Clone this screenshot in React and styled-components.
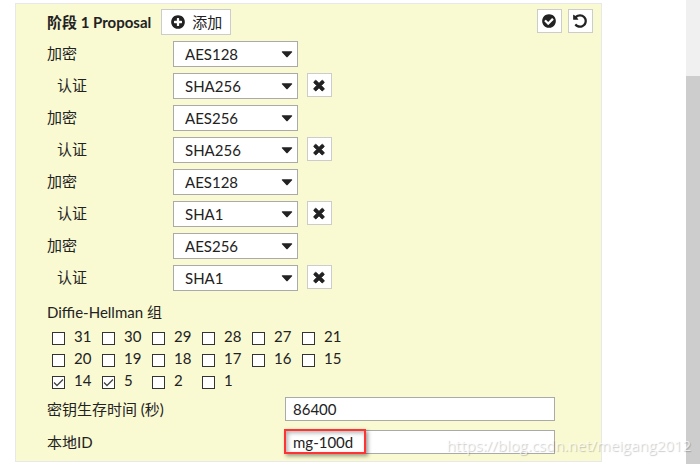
import React, { useState } from 'react';
import styled, { createGlobalStyle } from 'styled-components';

const GlobalStyle = createGlobalStyle`
    * {
        box-sizing: border-box;
    }

    body {
        margin: 0;
        background: #fff;
        color: #222;
        font-family: Lato, "Noto Sans CJK SC", sans-serif;
        font-size: 15px;
        line-height: 20px;
    }

    button, input, select {
        margin: 0;
        color: inherit;
        font: inherit;
    }
`;

const icons = {
    plus: 'M1344 960v-128q0-26-19-45t-45-19h-256v-256q0-26-19-45t-45-19h-128q-26 0-45 19t-19 45v256h-256q-26 0-45 19t-19 45v128q0 26 19 45t45 19h256v256q0 26 19 45t45 19h128q26 0 45-19t19-45v-256h256q26 0 45-19t19-45zm320-64q0 209-103 385.5t-279.5 279.5-385.5 103-385.5-103-279.5-279.5-103-385.5 103-385.5 279.5-279.5 385.5-103 385.5 103 279.5 279.5 103 385.5z',
    check: 'M1412 734q0-28-18-46l-91-90q-19-19-45-19t-45 19l-408 407-226-226q-19-19-45-19t-45 19l-91 90q-18 18-18 46 0 27 18 45l362 362q19 19 45 19 27 0 46-19l543-543q18-18 18-45zm252 162q0 209-103 385.5t-279.5 279.5-385.5 103-385.5-103-279.5-279.5-103-385.5 103-385.5 279.5-279.5 385.5-103 385.5 103 279.5 279.5 103 385.5z',
    undo: 'M1664 896q0 156-61 298t-164 245-245 164-298 61q-172 0-327-72.5t-264-204.5q-7-10-6.5-22.5t8.5-20.5l137-138q10-9 25-9 16 2 23 12 73 95 179 147t225 52q104 0 198.5-40.5t163.5-109.5 109.5-163.5 40.5-198.5-40.5-198.5-109.5-163.5-163.5-109.5-198.5-40.5q-98 0-188 35.5t-160 101.5l137 138q31 30 14 69-17 40-59 40h-448q-26 0-45-19t-19-45v-448q0-42 40-59 39-17 69 14l130 129q107-101 244.5-156.5t284.5-55.5q156 0 298 61t245 164 164 245 61 298z',
    times: 'M1490 1322q0 40-28 68l-136 136q-28 28-68 28t-68-28l-294-294-294 294q-28 28-68 28t-68-28l-136-136q-28-28-28-68t28-68l294-294-294-294q-28-28-28-68t28-68l136-136q28-28 68-28t68 28l294 294 294-294q28-28 68-28t68 28l136 136q28 28 28 68t-28 68l-294 294 294 294q28 28 28 68z',
    caret: 'M1480 660q0 26-19 45l-520 544q-19 19-45 19t-45-19l-520-544q-19-19-19-45t19-45 45-19h1040q26 0 45 19t19 45z',
};

const Icon = ({ name }) => (
    <svg width="16" height="16" viewBox="0 0 1792 1792" fill="currentColor" aria-hidden="true">
        <path d={icons[name]} stroke="currentColor" strokeWidth={name === 'times' ? 70 : 0} />
    </svg>
);

const proposals = [
    { encryption: 'AES128', auth: 'SHA256' },
    { encryption: 'AES256', auth: 'SHA256' },
    { encryption: 'AES128', auth: 'SHA1' },
    { encryption: 'AES256', auth: 'SHA1' },
];

const groups = [31, 30, 29, 28, 27, 21, 20, 19, 18, 17, 16, 15, 14, 5, 2, 1];

const Dropdown = ({ id, value, options }) => (
    <SelectBox>
        <Select id={id} defaultValue={value}>
            {options.map((option) => <option key={option}>{option}</option>)}
        </Select>
        <Icon name="caret" />
    </SelectBox>
);

const App = () => {
    const [selected, setSelected] = useState([14, 5]);

    const toggle = (group) => {
        setSelected(selected.includes(group)
            ? selected.filter((item) => item !== group)
            : [...selected, group]);
    };

    return (
        <Page>
            <GlobalStyle />
            <Panel>
                <Header>
                    <Title>阶段 1 Proposal</Title>
                    <AddButton type="button">
                        <Icon name="plus" />
                        添加
                    </AddButton>
                    <Actions>
                        <IconButton type="button" aria-label="确定"><Icon name="check" /></IconButton>
                        <IconButton type="button" aria-label="还原"><Icon name="undo" /></IconButton>
                    </Actions>
                </Header>

                <Proposals>
                    {proposals.map((item, index) => (
                        <React.Fragment key={index}>
                            <Row>
                                <Label htmlFor={`encryption-${index}`}>加密</Label>
                                <Dropdown id={`encryption-${index}`} value={item.encryption} options={['AES128', 'AES256']} />
                            </Row>
                            <Row>
                                <Label htmlFor={`auth-${index}`} $indent>认证</Label>
                                <Dropdown id={`auth-${index}`} value={item.auth} options={['SHA1', 'SHA256']} />
                                <IconButton type="button" aria-label="删除"><Icon name="times" /></IconButton>
                            </Row>
                        </React.Fragment>
                    ))}
                </Proposals>

                <Groups>
                    <Legend>Diffie-Hellman 组</Legend>
                    <GroupGrid>
                        {groups.map((group) => (
                            <Group key={group}>
                                <Checkbox type="checkbox" checked={selected.includes(group)} onChange={() => toggle(group)} />
                                {group}
                            </Group>
                        ))}
                    </GroupGrid>
                </Groups>

                <Fields>
                    <Field>
                        <Label htmlFor="lifetime" $wide>密钥生存时间 (秒)</Label>
                        <InputBox><Input id="lifetime" type="text" defaultValue="86400" /></InputBox>
                    </Field>
                    <Field>
                        <Label htmlFor="local-id" $wide>本地ID</Label>
                        <InputBox>
                            <Input id="local-id" type="text" defaultValue="mg-100d" />
                            <Highlight />
                        </InputBox>
                    </Field>
                </Fields>
            </Panel>
            <Scrollbar><Thumb /></Scrollbar>
            <Watermark>https://blog.csdn.net/meigang2012</Watermark>
        </Page>
    );
};

const Page = styled.div`
    position: relative;
    display: flex;
    min-height: 100vh;
`;

const Panel = styled.form`
    flex: 1;
    margin: 3px 84px 2px 15px;
    padding: 5px 8px 6px 31px;
    border: 1px solid #e8e8e8;
    background: #f9f9d2;
`;

const Header = styled.div`
    display: flex;
    align-items: flex-start;
`;

const Title = styled.h2`
    margin: 0 10px 0 0;
    font-size: 15px;
    font-weight: 700;
    line-height: 26px;
`;

const Actions = styled.div`
    display: flex;
    gap: 6px;
    margin-left: auto;
`;

const Button = styled.button`
    display: flex;
    align-items: center;
    padding: 0;
    border: 1px solid #ccc;
    background: #fff;
    cursor: pointer;
`;

const AddButton = styled(Button)`
    justify-content: center;
    gap: 6px;
    width: 70px;
    height: 26px;
`;

const IconButton = styled(Button)`
    width: 25px;
    height: 24px;
    padding-left: 3px;
`;

const Proposals = styled.div`
    display: flex;
    flex-direction: column;
    gap: 6px;
    padding-top: 6px;
`;

const Row = styled.div`
    display: flex;
    align-items: flex-start;

    ${IconButton} {
        margin-left: 9px;
    }
`;

const Label = styled.label`
    flex: none;
    width: ${(props) => (props.$wide ? '238px' : '126px')};
    padding-left: ${(props) => (props.$indent ? '10px' : '0')};
    line-height: 24px;
`;

const SelectBox = styled.div`
    position: relative;
    width: 125px;

    svg {
        position: absolute;
        top: 5px;
        right: 3px;
        pointer-events: none;
    }
`;

const Select = styled.select`
    display: block;
    width: 100%;
    height: 26px;
    padding: 0 24px 0 11px;
    border: 1px solid #aaa;
    border-radius: 0;
    background: #fff;
    appearance: none;
`;

const Groups = styled.fieldset`
    margin: 0;
    padding: 11px 0 0;
    border: 0;
`;

const Legend = styled.legend`
    float: left;
    width: 100%;
    padding: 0;
`;

const GroupGrid = styled.div`
    display: grid;
    grid-template-columns: repeat(6, 50px);
    clear: both;
    padding: 4px 0 0 5px;
`;

const Group = styled.label`
    display: flex;
    gap: 9px;
    height: 22px;
    line-height: 20px;
`;

const Checkbox = styled.input`
    width: 13px;
    height: 13px;
    margin-top: 6px;
    border: 1px solid #333;
    background: #fff;
    appearance: none;

    &:checked {
        background: #fff url("data:image/svg+xml,%3Csvg xmlns='http://www.w3.org/2000/svg' viewBox='0 0 11 11'%3E%3Cpath d='M1 5.5l3 3L10 2.5' fill='none' stroke='%23444' stroke-width='1.3'/%3E%3C/svg%3E");
    }
`;

const Fields = styled.div`
    display: flex;
    flex-direction: column;
    gap: 9px;
    padding: 5px 38px 0 0;
`;

const Field = styled.div`
    display: flex;
`;

const InputBox = styled.div`
    position: relative;
    flex: 1;
`;

const Input = styled.input`
    display: block;
    width: 100%;
    height: 24px;
    padding: 0 7px;
    border: 1px solid #aaa;
    border-radius: 0;
    background: #fff;
`;

const Highlight = styled.span`
    position: absolute;
    top: -1px;
    left: -1px;
    width: 82px;
    height: 25px;
    border: 2px solid #f33;
    box-shadow: 2px 2px 4px rgba(0, 0, 0, 0.4), inset 2px 2px 4px rgba(0, 0, 0, 0.3);
    pointer-events: none;
`;

const Scrollbar = styled.div`
    width: 14px;
    padding-top: 76px;
    display: flex;
    background: #f0f0f0;
`;

const Thumb = styled.div`
    flex: 1;
    background: #cdcdcd;
`;

const Watermark = styled.div`
    position: absolute;
    right: 9px;
    bottom: 9px;
    color: rgba(255, 255, 255, 0.7);
    font-family: "Open Sans", sans-serif;
    font-size: 15px;
    text-shadow: 1px 1px 1px rgba(0, 0, 0, 0.2);
    pointer-events: none;
`;

export default App;
